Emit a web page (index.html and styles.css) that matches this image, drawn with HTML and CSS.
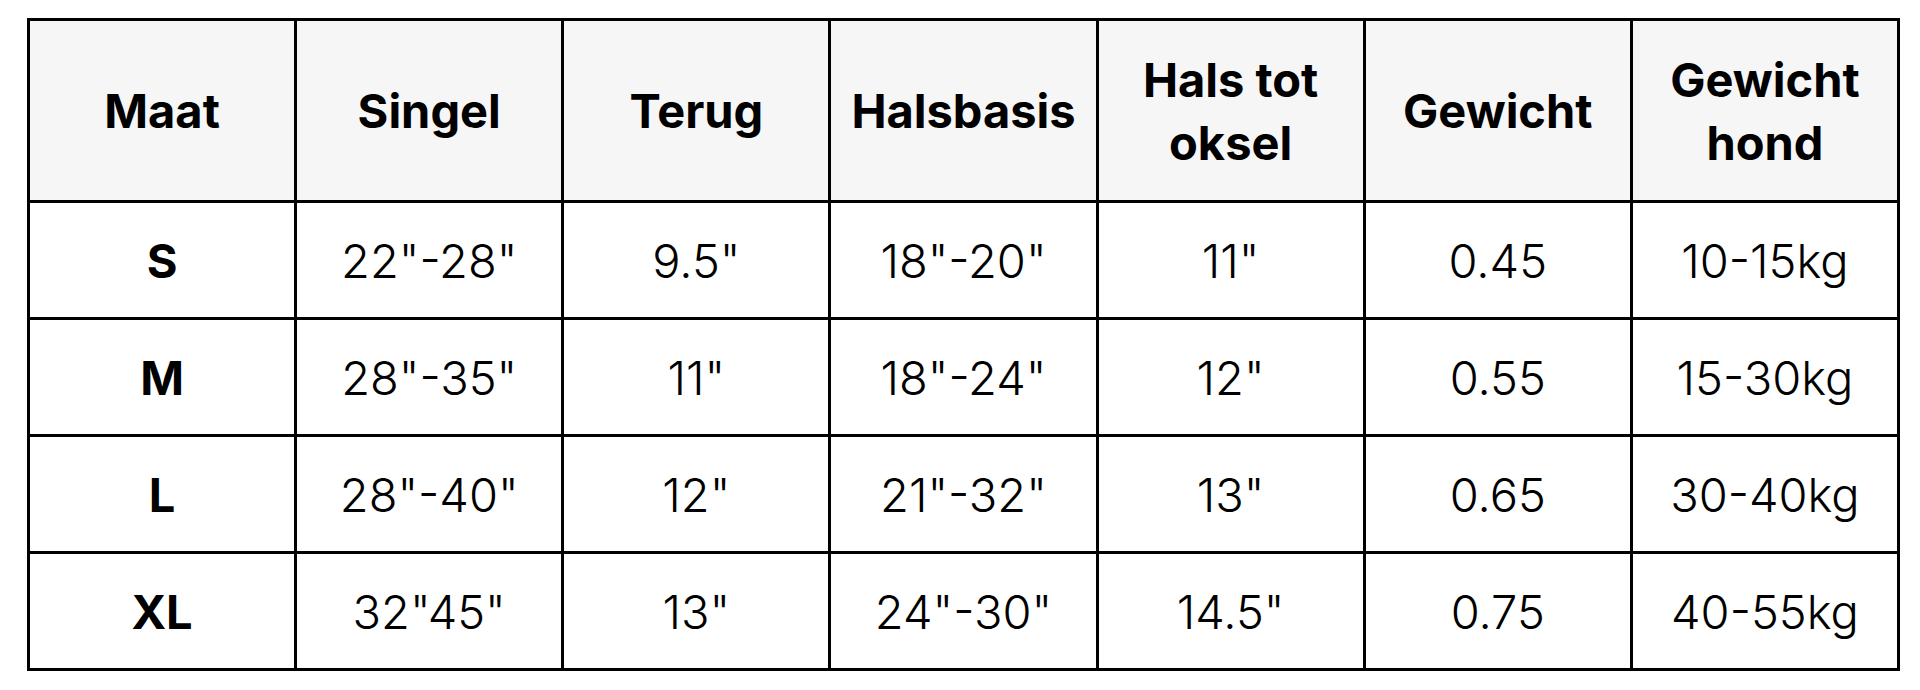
FILE: index.html
```html
<!DOCTYPE html>
<html lang="nl">
<head>
<meta charset="utf-8">
<title>Maattabel</title>
<link rel="stylesheet" href="styles.css">
</head>
<body>
<table class="size-table">
  <thead>
    <tr>
      <th>Maat</th>
      <th>Singel</th>
      <th>Terug</th>
      <th>Halsbasis</th>
      <th>Hals tot<br>oksel</th>
      <th>Gewicht</th>
      <th>Gewicht<br>hond</th>
    </tr>
  </thead>
  <tbody>
    <tr><td class="size">S</td><td>22"-28"</td><td>9.5"</td><td>18"-20"</td><td>11"</td><td>0.45</td><td>10-15kg</td></tr>
    <tr><td class="size">M</td><td>28"-35"</td><td>11"</td><td>18"-24"</td><td>12"</td><td>0.55</td><td>15-30kg</td></tr>
    <tr><td class="size">L</td><td>28"-40"</td><td>12"</td><td>21"-32"</td><td>13"</td><td>0.65</td><td>30-40kg</td></tr>
    <tr><td class="size">XL</td><td>32"45"</td><td>13"</td><td>24"-30"</td><td>14.5"</td><td>0.75</td><td>40-55kg</td></tr>
  </tbody>
</table>
</body>
</html>
```
FILE: styles.css
```css
html, body {
  margin: 0;
  padding: 0;
  background: #ffffff;
}
body {
  padding: 18px 0 0 27px;
  font-family: Inter, "Open Sans", "Liberation Sans", sans-serif;
  color: #000;
}
.size-table {
  border-collapse: collapse;
  width: 1873px;
  table-layout: fixed;
}
.size-table th,
.size-table td {
  border: 3px solid #000;
  text-align: center;
  vertical-align: middle;
  padding: 0;
  font-size: 47px;
}
.size-table th {
  background: #f6f6f6;
  font-weight: 700;
  line-height: 63px;
  height: 179px;
}
.size-table td {
  font-weight: 300;
  height: 114px;
  line-height: 1;
}
.size-table td.size {
  font-weight: 700;
}
```
